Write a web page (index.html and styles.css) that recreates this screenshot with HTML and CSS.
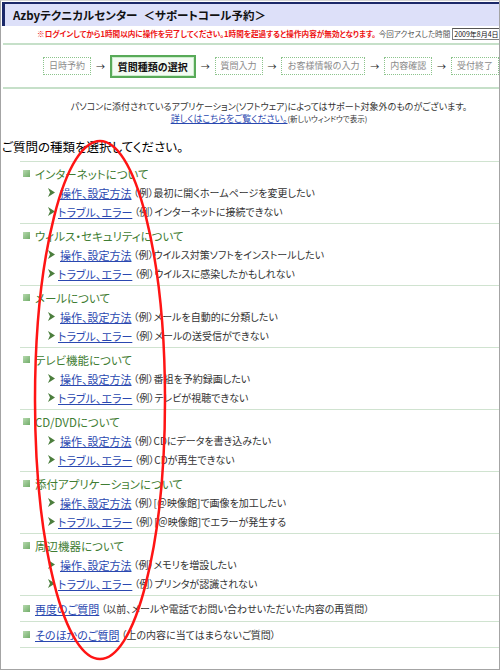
FILE: index.html
```html
<!DOCTYPE html>
<html lang="ja">
<head>
<meta charset="utf-8">
<title>Azbyテクニカルセンター</title>
<link rel="stylesheet" href="styles.css">
</head>
<body>
<div class="frame">
  <div class="header"><span class="brand">Azbyテクニカルセンター</span><span class="sub">＜サポートコール予約＞</span></div>
  <div class="notice">
    <span class="warn">※ログインしてから1時間以内に操作を完了してください。1時間を超過すると操作内容が無効となります。</span>
    <span class="access">今回アクセスした時間</span>
    <span class="time">2009年8月4日</span>
  </div>
  <div class="rule"></div>
  <div class="steps">
    <span class="step">日時予約</span><span class="arr">→</span>
    <span class="step cur">質問種類の選択</span><span class="arr">→</span>
    <span class="step">質問入力</span><span class="arr">→</span>
    <span class="step">お客様情報の入力</span><span class="arr">→</span>
    <span class="step">内容確認</span><span class="arr">→</span>
    <span class="step">受付終了</span>
  </div>
  <div class="rule"></div>
  <div class="intro">
    <p class="line">パソコンに添付されているアプリケーション(ソフトウェア)によってはサポート対象外のものがございます。</p>
    <p class="line"><a class="more" href="#">詳しくはこちらをご覧ください。</a><span class="small">(新しいウィンドウで表示)</span></p>
  </div>
  <h1 class="ttl">ご質問の種類を選択してください。</h1>
  <div class="qlist">
    <div class="sec">
      <div class="sec-title"><i class="sq"></i>インターネットについて</div>
      <div class="item"><svg class="tri sp" viewBox="0 0 7 9"><polygon points="0,0 7,4.5 0,9 2,4.5"/></svg><a class="lnk" href="#">操作、設定方法</a><span class="ex">（例）最初に開くホームページを変更したい</span></div>
      <div class="item"><svg class="tri" viewBox="0 0 7 9"><polygon points="0,0 7,4.5 0,9 2,4.5"/></svg><a class="lnk" href="#">トラブル、エラー</a><span class="ex">（例）インターネットに接続できない</span></div>
    </div>
    <div class="sec">
      <div class="sec-title"><i class="sq"></i>ウィルス・セキュリティについて</div>
      <div class="item"><svg class="tri sp" viewBox="0 0 7 9"><polygon points="0,0 7,4.5 0,9 2,4.5"/></svg><a class="lnk" href="#">操作、設定方法</a><span class="ex">（例）ウイルス対策ソフトをインストールしたい</span></div>
      <div class="item"><svg class="tri" viewBox="0 0 7 9"><polygon points="0,0 7,4.5 0,9 2,4.5"/></svg><a class="lnk" href="#">トラブル、エラー</a><span class="ex">（例）ウイルスに感染したかもしれない</span></div>
    </div>
    <div class="sec">
      <div class="sec-title"><i class="sq"></i>メールについて</div>
      <div class="item"><svg class="tri sp" viewBox="0 0 7 9"><polygon points="0,0 7,4.5 0,9 2,4.5"/></svg><a class="lnk" href="#">操作、設定方法</a><span class="ex">（例）メールを自動的に分類したい</span></div>
      <div class="item"><svg class="tri" viewBox="0 0 7 9"><polygon points="0,0 7,4.5 0,9 2,4.5"/></svg><a class="lnk" href="#">トラブル、エラー</a><span class="ex">（例）メールの送受信ができない</span></div>
    </div>
    <div class="sec">
      <div class="sec-title"><i class="sq"></i>テレビ機能について</div>
      <div class="item"><svg class="tri sp" viewBox="0 0 7 9"><polygon points="0,0 7,4.5 0,9 2,4.5"/></svg><a class="lnk" href="#">操作、設定方法</a><span class="ex">（例）番組を予約録画したい</span></div>
      <div class="item"><svg class="tri" viewBox="0 0 7 9"><polygon points="0,0 7,4.5 0,9 2,4.5"/></svg><a class="lnk" href="#">トラブル、エラー</a><span class="ex">（例）テレビが視聴できない</span></div>
    </div>
    <div class="sec">
      <div class="sec-title"><i class="sq"></i>CD/DVDについて</div>
      <div class="item"><svg class="tri sp" viewBox="0 0 7 9"><polygon points="0,0 7,4.5 0,9 2,4.5"/></svg><a class="lnk" href="#">操作、設定方法</a><span class="ex">（例）CDにデータを書き込みたい</span></div>
      <div class="item"><svg class="tri" viewBox="0 0 7 9"><polygon points="0,0 7,4.5 0,9 2,4.5"/></svg><a class="lnk" href="#">トラブル、エラー</a><span class="ex">（例）CDが再生できない</span></div>
    </div>
    <div class="sec">
      <div class="sec-title"><i class="sq"></i>添付アプリケーションについて</div>
      <div class="item"><svg class="tri sp" viewBox="0 0 7 9"><polygon points="0,0 7,4.5 0,9 2,4.5"/></svg><a class="lnk" href="#">操作、設定方法</a><span class="ex">（例）[＠映像館]で画像を加工したい</span></div>
      <div class="item"><svg class="tri" viewBox="0 0 7 9"><polygon points="0,0 7,4.5 0,9 2,4.5"/></svg><a class="lnk" href="#">トラブル、エラー</a><span class="ex">（例）[＠映像館]でエラーが発生する</span></div>
    </div>
    <div class="sec">
      <div class="sec-title"><i class="sq"></i>周辺機器について</div>
      <div class="item"><svg class="tri sp" viewBox="0 0 7 9"><polygon points="0,0 7,4.5 0,9 2,4.5"/></svg><a class="lnk" href="#">操作、設定方法</a><span class="ex">（例）メモリを増設したい</span></div>
      <div class="item"><svg class="tri" viewBox="0 0 7 9"><polygon points="0,0 7,4.5 0,9 2,4.5"/></svg><a class="lnk" href="#">トラブル、エラー</a><span class="ex">（例）プリンタが認識されない</span></div>
    </div>
    <div class="row"><i class="sq"></i><a class="lnk" href="#">再度のご質問</a><span class="ex">（以前、メールや電話でお問い合わせいただいた内容の再質問）</span></div>
    <div class="row"><i class="sq"></i><a class="lnk" href="#">そのほかのご質問</a><span class="ex">（上の内容に当てはまらないご質問）</span></div>
  </div>
</div>
<svg class="mark" viewBox="0 0 500 670" width="500" height="670"><ellipse cx="100" cy="400" rx="65" ry="259"/></svg>
</body>
</html>
```

FILE: styles.css
```css
html, body {
  margin: 0;
  padding: 0;
}
body {
  position: relative;
  width: 500px;
  height: 670px;
  overflow: hidden;
  background: #fff;
  font-family: "Noto Sans CJK JP", "Noto Sans", sans-serif;
  font-feature-settings: "palt";
  color: #222;
}
.frame {
  box-sizing: border-box;
  width: 500px;
  height: 670px;
  border: 1px solid #a4a4a4;
  border-top-color: #d4d4d4;
  overflow: hidden;
}
.header {
  margin: 1px 0 0 1px;
  height: 22px;
  line-height: 22px;
  padding-left: 8px;
  border-left: 3px solid #1b2869;
  border-top: 2px solid #1b2869;
  background: #dde0f9;
  font-size: 11.5px;
  font-weight: 700;
  color: #111;
  white-space: nowrap;
}
.sub {
  margin-left: 6px;
}
.notice {
  margin-top: 1px;
  height: 13px;
  padding-left: 36px;
  display: flex;
  align-items: center;
  white-space: nowrap;
  overflow: hidden;
  font-size: 7.6px;
}
.warn {
  color: #ee1111;
  font-weight: 700;
  margin-right: 3px;
}
.access {
  color: #555;
  margin-right: 2px;
}
.time {
  flex-shrink: 0;
  box-sizing: border-box;
  height: 12px;
  line-height: 10px;
  padding: 0 1px;
  border: 1px solid #808080;
  border-top-color: #555;
  border-right: none;
  color: #111;
  font-size: 7px;
}
.rule {
  margin: 3px 0 0 2px;
  height: 2px;
  background: #c6e0c9;
}
.steps + .rule {
  margin-top: 0;
}
.steps {
  height: 42px;
  padding-left: 42px;
  display: flex;
  align-items: center;
}
.step {
  box-sizing: border-box;
  height: 18px;
  line-height: 12px;
  padding: 2px 5px;
  border: 1px dotted #8cc48c;
  color: #8a8a8a;
  font-size: 9px;
  font-feature-settings: normal;
  white-space: nowrap;
}
.step.cur {
  height: 23px;
  line-height: 13px;
  padding: 3px 6px;
  border: 2px solid #58aa58;
  box-shadow: inset 0 0 0 1px #cdeccd;
  background: #f3fbf3;
  color: #111;
  font-size: 10px;
  font-weight: 700;
}
.arr {
  width: 19px;
  text-align: center;
  font-size: 9px;
  color: #222;
  font-feature-settings: normal;
}
.intro {
  padding: 12px 0 0 38px;
  text-align: center;
}
.line {
  margin: 0;
  height: 12px;
  line-height: 12px;
  font-size: 9px;
  color: #333;
  white-space: nowrap;
}
.more {
  color: #2a48b0;
  text-decoration: underline;
}
.small {
  font-size: 7.5px;
  color: #333;
}
.ttl {
  margin: 13px 0 0 1px;
  height: 18px;
  line-height: 18px;
  font-size: 12.5px;
  font-weight: 400;
  color: #000;
}
.qlist {
  margin: 5px 0 0 19px;
  border-top: 1px solid #d0e3d0;
}
.sec {
  padding: 2px 0;
  border-bottom: 1px solid #d0e3d0;
}
.sec-title {
  height: 19px;
  padding-left: 3px;
  display: flex;
  align-items: center;
  font-size: 11.5px;
  color: #3f7d33;
  white-space: nowrap;
}
.sq {
  display: inline-block;
  width: 7px;
  height: 7px;
  margin-right: 5px;
  background: linear-gradient(135deg, #b6d9ae, #72ad6a);
  flex-shrink: 0;
}
.item {
  height: 19px;
  padding-left: 28px;
  display: flex;
  align-items: center;
  white-space: nowrap;
}
.tri {
  width: 7px;
  height: 9px;
  margin-right: 3px;
  fill: #4c7e3d;
  flex-shrink: 0;
}
.tri.sp {
  margin-right: 5px;
}
.lnk {
  font-size: 11px;
  color: #2a48b0;
  text-decoration: underline;
}
.ex {
  margin-left: 2px;
  font-size: 10px;
  color: #333;
}
.row {
  height: 25px;
  padding-left: 3px;
  display: flex;
  align-items: center;
  border-bottom: 1px solid #d0e3d0;
  white-space: nowrap;
}
.mark {
  position: absolute;
  left: 0;
  top: 0;
  pointer-events: none;
}
.mark ellipse {
  fill: none;
  stroke: #ff1414;
  stroke-width: 2.5;
}
```
